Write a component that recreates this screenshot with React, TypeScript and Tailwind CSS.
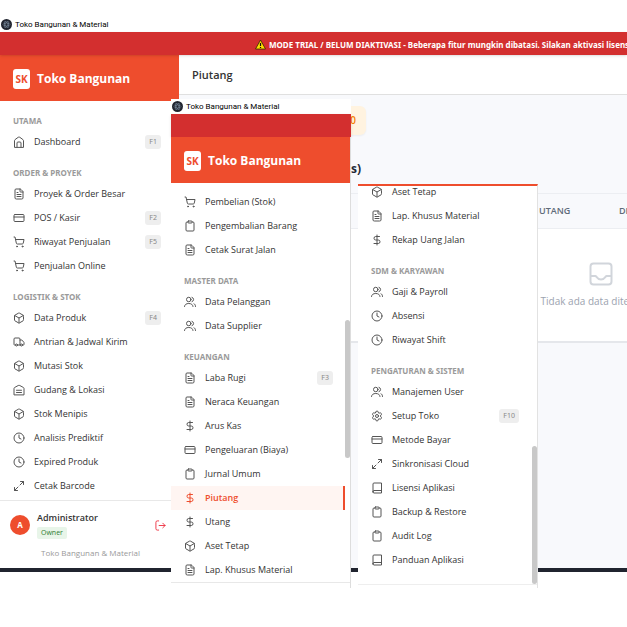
import React from "react";
import {
  Box,
  Clipboard,
  Clock,
  CreditCard,
  DollarSign,
  FileText,
  Maximize2,
  Settings,
  ShoppingCart,
  Truck,
} from "lucide-react";

type IconType = React.ComponentType<{ className?: string; strokeWidth?: number }>;
type Item = { label: string; icon: IconType; hotkey?: string; active?: boolean };
type Section = { title?: string; items: Item[] };

function Glyph({ className, strokeWidth = 2, children }: { className?: string; strokeWidth?: number; children: React.ReactNode }) {
  return (
    <svg className={className} viewBox="0 0 24 24" fill="none" stroke="currentColor" strokeWidth={strokeWidth} strokeLinecap="round" strokeLinejoin="round" aria-hidden="true">
      {children}
    </svg>
  );
}

const Home: IconType = (p) => (
  <Glyph {...p}>
    <path d="M3 22V9.500q0-1.500 1.200-2.400L10.500 2.500q1.500-1 3 0l6.300 4.600Q21 8 21 9.500V22z" />
    <path d="M8 22v-8a2 2 0 0 1 2-2h4a2 2 0 0 1 2 2v8" />
  </Glyph>
);

const Store: IconType = (p) => (
  <Glyph {...p}>
    <path d="M2 21V9q0-1.500 1.500-2.200L10.500 3q1.500-.7 3 0l7 3.800Q22 7.500 22 9v12z" />
    <path d="M7 12.500h10M7 17h10" />
  </Glyph>
);

const People: IconType = (p) => (
  <Glyph {...p}>
    <circle cx="9.500" cy="7" r="4.500" />
    <path d="M1 21c.5-4 3.500-6 8.500-6s8 2 8.500 6M16 2.700a4.500 4.500 0 0 1 0 8.600M20 15.500c2 1 3 2.500 3 5.500" />
  </Glyph>
);

const Manual: IconType = (p) => (
  <Glyph {...p}>
    <path d="M4 20V4q0-2 2-2h15v20H6q-2 0-2-2zM4 19q0-2 2-2h15" />
  </Glyph>
);

const SignOut: IconType = (p) => (
  <Glyph {...p}>
    <path d="M8 2H5Q2 2 2 5v14q0 3 3 3h3M9 12h13M17 7l5 5-5 5" />
  </Glyph>
);

const Tray: IconType = (p) => (
  <Glyph {...p}>
    <rect x="1.500" y="1.500" width="21" height="21" rx="3" />
    <path d="M2 14h4.500c1 0 1.500 3.500 5.500 3.500s4.500-3.500 5.500-3.500H22" />
  </Glyph>
);

const mainMenu: Section[] = [
  { title: "UTAMA", items: [{ label: "Dashboard", icon: Home, hotkey: "F1" }] },
  {
    title: "ORDER & PROYEK",
    items: [
      { label: "Proyek & Order Besar", icon: FileText },
      { label: "POS / Kasir", icon: CreditCard, hotkey: "F2" },
      { label: "Riwayat Penjualan", icon: ShoppingCart, hotkey: "F5" },
      { label: "Penjualan Online", icon: ShoppingCart },
    ],
  },
  {
    title: "LOGISTIK & STOK",
    items: [
      { label: "Data Produk", icon: Box, hotkey: "F4" },
      { label: "Antrian & Jadwal Kirim", icon: Truck },
      { label: "Mutasi Stok", icon: Box },
      { label: "Gudang & Lokasi", icon: Store },
      { label: "Stok Menipis", icon: Box },
      { label: "Analisis Prediktif", icon: Clock },
      { label: "Expired Produk", icon: Clock },
      { label: "Cetak Barcode", icon: Maximize2 },
    ],
  },
];

const financeMenu: Section[] = [
  {
    items: [
      { label: "Pembelian (Stok)", icon: ShoppingCart },
      { label: "Pengembalian Barang", icon: Clipboard },
      { label: "Cetak Surat Jalan", icon: FileText },
    ],
  },
  {
    title: "MASTER DATA",
    items: [
      { label: "Data Pelanggan", icon: People },
      { label: "Data Supplier", icon: People },
    ],
  },
  {
    title: "KEUANGAN",
    items: [
      { label: "Laba Rugi", icon: FileText, hotkey: "F3" },
      { label: "Neraca Keuangan", icon: FileText },
      { label: "Arus Kas", icon: DollarSign },
      { label: "Pengeluaran (Biaya)", icon: CreditCard },
      { label: "Jurnal Umum", icon: Clipboard },
      { label: "Piutang", icon: DollarSign, active: true },
      { label: "Utang", icon: DollarSign },
      { label: "Aset Tetap", icon: Box },
      { label: "Lap. Khusus Material", icon: FileText },
    ],
  },
];

const systemMenu: Section[] = [
  {
    items: [
      { label: "Aset Tetap", icon: Box },
      { label: "Lap. Khusus Material", icon: FileText },
      { label: "Rekap Uang Jalan", icon: DollarSign },
    ],
  },
  {
    title: "SDM & KARYAWAN",
    items: [
      { label: "Gaji & Payroll", icon: People },
      { label: "Absensi", icon: Clock },
      { label: "Riwayat Shift", icon: Clock },
    ],
  },
  {
    title: "PENGATURAN & SISTEM",
    items: [
      { label: "Manajemen User", icon: People },
      { label: "Setup Toko", icon: Settings, hotkey: "F10" },
      { label: "Metode Bayar", icon: CreditCard },
      { label: "Sinkronisasi Cloud", icon: Maximize2 },
      { label: "Lisensi Aplikasi", icon: Manual },
      { label: "Backup & Restore", icon: Clipboard },
      { label: "Audit Log", icon: Clipboard },
      { label: "Panduan Aplikasi", icon: Manual },
    ],
  },
];

function Menu({ sections }: { sections: Section[] }) {
  return (
    <nav>
      {sections.map((section, i) => (
        <section key={i}>
          {section.title && (
            <h2 className="px-[13px] pt-[13px] pb-[3px] font-['Noto_Sans',sans-serif] text-[8px] leading-3 font-bold text-[#9a9a9a]">
              {section.title}
            </h2>
          )}
          <ul>
            {section.items.map(({ label, icon: Icon, hotkey, active }) => (
              <li key={label}>
                <a
                  href="#"
                  className={
                    active
                      ? "flex h-6 items-center gap-[9px] border-r-2 border-[#ee4d2d] bg-[#fff5f2] pl-[13px] text-[9px] font-semibold text-[#ee4d2d]"
                      : "flex h-6 items-center gap-[9px] pr-3 pl-[13px] text-[9px] text-[#333333]"
                  }
                >
                  <Icon className={active ? "size-3 shrink-0" : "size-3 shrink-0 text-[#555555]"} strokeWidth={2} />
                  <span className="flex-1 whitespace-nowrap">{label}</span>
                  {hotkey && (
                    <kbd className="rounded-[3px] bg-[#eeeeee] px-1 font-['Noto_Sans',sans-serif] text-[7px] leading-[14px] text-[#888888]">
                      {hotkey}
                    </kbd>
                  )}
                </a>
              </li>
            ))}
          </ul>
        </section>
      ))}
    </nav>
  );
}

function TitleBar() {
  return (
    <div className="flex h-[15px] items-center gap-[3px] bg-white px-px font-[Roboto,sans-serif] text-[8px] text-black">
      <svg className="size-[11px]" viewBox="0 0 22 22" aria-hidden="true">
        <circle cx="11" cy="11" r="11" fill="#20242f" />
        <g fill="none" stroke="#8294a8" strokeWidth="1">
          <ellipse cx="11" cy="11" rx="7" ry="3" />
          <ellipse cx="11" cy="11" rx="7" ry="3" transform="rotate(60 11 11)" />
          <ellipse cx="11" cy="11" rx="7" ry="3" transform="rotate(120 11 11)" />
        </g>
      </svg>
      <span className="whitespace-nowrap">Toko Bangunan &amp; Material</span>
    </div>
  );
}

function Brand() {
  return (
    <div className="flex h-[46px] items-center gap-[7px] bg-[#ee4d2d] px-[13px] pt-0.5">
      <span className="flex h-5 w-[17px] items-center justify-center rounded-[3px] bg-white text-[10px] font-bold text-[#ee4d2d]">SK</span>
      <span className="text-[12px] font-bold whitespace-nowrap text-white">Toko Bangunan</span>
    </div>
  );
}

export default function App() {
  return (
    <div className="relative min-h-screen overflow-hidden bg-white pt-[17px] font-['Open_Sans',sans-serif]">
      <TitleBar />
      <div className="relative flex h-[23px] items-center overflow-hidden bg-[#d32f2f] pt-0.5 pl-[255px] text-white shadow-sm">
        <p className="flex items-center gap-[3px] font-['Noto_Sans',sans-serif] text-[8px] font-bold whitespace-nowrap">
          <svg className="size-[11px]" viewBox="0 0 22 22" aria-hidden="true">
            <path d="M11 2 21 20H1z" fill="#ffde00" stroke="#2b2400" strokeWidth="1.500" strokeLinejoin="round" />
            <path d="M11 8v6M11 16v2" stroke="#111111" strokeWidth="2.500" />
          </svg>
          MODE TRIAL / BELUM DIAKTIVASI - Beberapa fitur mungkin dibatasi. Silakan aktivasi lisensi
        </p>
      </div>

      <div className="flex border-b-4 border-[#20242f]">
        <aside className="w-[179px] shrink-0 bg-white">
          <Brand />
          <div className="pt-px pr-1.5 pb-1.5">
            <Menu sections={mainMenu} />
          </div>
          <div className="mt-[-4px] h-[68px] border-t border-[#e8e8e8] px-[10px] pt-[10px]">
            <div className="flex items-center gap-[7px]">
              <span className="flex size-5 items-center justify-center rounded-full bg-[#ee4d2d] text-[8px] font-bold text-white">A</span>
              <div className="flex-1">
                <p className="text-[9px] leading-[14px] font-semibold text-[#333333]">Administrator</p>
                <span className="mt-0.5 block w-fit rounded-[2px] bg-[#e8f5e9] px-1 text-[7px] leading-3 text-[#2e7d32]">Owner</span>
              </div>
              <button type="button" aria-label="Keluar" className="pr-[3px] text-[#ee2f3f]">
                <SignOut className="size-[11px]" />
              </button>
            </div>
            <p className="mt-2 pl-[31px] text-[8px] leading-3 whitespace-nowrap text-[#999999]">Toko Bangunan &amp; Material</p>
          </div>
        </aside>

        <main className="min-w-0 flex-1 overflow-hidden bg-[#f8f9fc]">
          <header className="flex h-10 items-center border-b border-[#e0e0e0] bg-white px-[13px] pt-0.5">
            <h1 className="text-[11px] font-semibold text-[#333333]">Piutang</h1>
          </header>
          <div className="px-[14px] pt-[11px]">
            <div className="w-[173px] rounded-md bg-[#fff3e0] pr-[10px] text-right text-[10px] leading-[29px] font-semibold text-[#f57c00] shadow-xs">0</div>
            <h2 className="mt-[26px] w-[168px] text-right text-[12px] leading-4 font-bold text-[#1f2937]">s)</h2>
            <div className="mt-4 min-w-[816px] border-b-2 border-[#e5e7eb] bg-white">
              <table className="w-full table-fixed text-left">
                <thead>
                  <tr className="h-[35px] border-y border-[#eceef2] bg-[#f8f9fc] text-[9px] text-[#5f6b7a]">
                    <th className="w-[426px] pl-[346px] font-semibold">UTANG</th>
                    <th className="font-semibold">DIBAYAR</th>
                  </tr>
                </thead>
                <tbody>
                  <tr>
                    <td colSpan={2} className="h-[112px] pt-0.5 text-center text-[10px] text-[#9ca3af]">
                      <Tray className="mx-auto mb-2 size-6 text-[#d1d5db]" />
                      Tidak ada data ditemukan
                    </td>
                  </tr>
                </tbody>
              </table>
            </div>
          </div>
        </main>
      </div>

      <div className="absolute top-[99px] left-[171px] w-[180px] bg-white">
        <TitleBar />
        <div className="relative h-[23px] bg-[#d32f2f] shadow-sm" />
        <div className="relative border-r border-[#dddddd]">
          <Brand />
          <div className="border-b border-[#e8e8e8] pt-[7px] pr-[5px]">
            <Menu sections={financeMenu} />
          </div>
          <div className="h-[5px]" />
          <div className="absolute top-[183px] right-0 h-[138px] w-[5px] rounded-full bg-[#c8c8c8]" />
        </div>
      </div>

      <div className="absolute top-[184px] left-[358px] w-[180px] border-t-2 border-r border-t-[#ee4d2d] border-r-[#e2e2e2] bg-white">
        <div className="flex h-[398px] flex-col justify-end overflow-hidden pr-[6px] pb-3">
          <Menu sections={systemMenu} />
        </div>
        <div className="h-1 border-t border-[#eeeeee]" />
        <div className="absolute right-0 bottom-1 h-[138px] w-[5px] rounded-full bg-[#c8c8c8]" />
      </div>
    </div>
  );
}
